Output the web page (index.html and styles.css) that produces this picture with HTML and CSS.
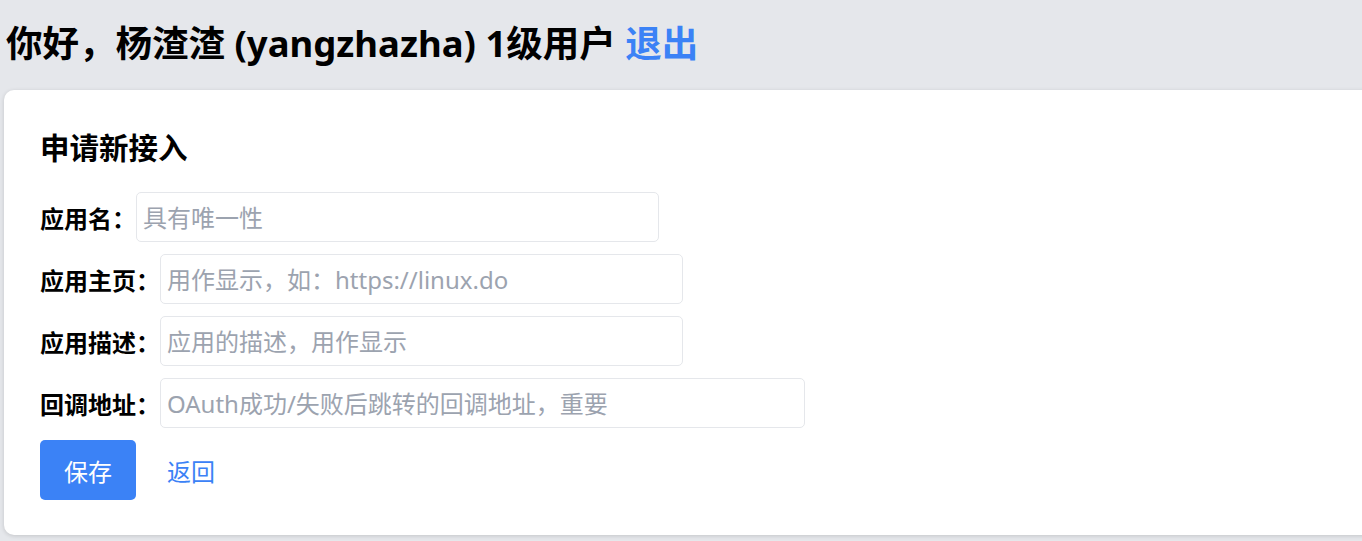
FILE: index.html
```html
<!DOCTYPE html>
<html>

<head>
    <meta charset="UTF-8">
    <title>申请新接入</title>
    <link rel="stylesheet" href="styles.css">
</head>

<body>
    <div class="top">
        <h1>你好，杨渣渣 (yangzhazha) 1级用户 <a href="#" class="logout">退出</a></h1>
    </div>

    <div class="card">
        <h2>申请新接入</h2>
        <form class="form">
            <div class="row">
                <label>应用名：</label>
                <input type="text" class="w-short" placeholder="具有唯一性">
            </div>
            <div class="row">
                <label>应用主页：</label>
                <input type="text" class="w-short" placeholder="用作显示，如：https://linux.do">
            </div>
            <div class="row">
                <label>应用描述：</label>
                <input type="text" class="w-short" placeholder="应用的描述，用作显示">
            </div>
            <div class="row">
                <label>回调地址：</label>
                <input type="text" class="w-long" placeholder="OAuth成功/失败后跳转的回调地址，重要">
            </div>
            <div class="actions">
                <button type="button" class="btn-save">保存</button>
                <a href="#" class="back">返回</a>
            </div>
        </form>
    </div>
</body>

</html>
```

FILE: styles.css
```css
html,
body {
    margin: 0;
    padding: 0;
    overflow: hidden;
}

body {
    background: #e5e7eb;
    font-family: "Noto Sans", "Noto Sans CJK SC", sans-serif;
    color: #000;
    height: 541px;
}

.top {
    padding: 22px 0 0 6px;
}

h1 {
    margin: 0;
    font-size: 36.5px;
    line-height: 43px;
    font-weight: bold;
    white-space: nowrap;
}

.logout {
    color: #3b82f6;
    text-decoration: none;
}

.card {
    margin: 25px -40px 0 4px;
    background: #fff;
    border-radius: 10px;
    box-shadow: 0 1px 4px rgba(0, 0, 0, 0.15);
    padding: 38px 37px 35px 36px;
}

h2 {
    margin: 0 0 24px 0;
    font-size: 29.5px;
    line-height: 40px;
    font-weight: bold;
}

.form {
    display: flex;
    flex-direction: column;
    gap: 12px;
}

.row {
    display: flex;
    align-items: center;
    height: 50px;
}

.row label {
    font-size: 24px;
    font-weight: bold;
    white-space: nowrap;
}

.row input {
    box-sizing: border-box;
    height: 50px;
    border: 1px solid #e5e7eb;
    border-radius: 5px;
    padding: 0 6px;
    font-family: inherit;
    font-size: 24px;
    color: #111;
    outline: none;
}

.row input::placeholder {
    color: #9ca3af;
}

.w-short {
    width: 523px;
}

.w-long {
    width: 645px;
}

.actions {
    display: flex;
    align-items: center;
}

.btn-save {
    width: 96px;
    height: 60px;
    border: none;
    border-radius: 5px;
    background: #3b82f6;
    color: #fff;
    font-family: inherit;
    font-size: 24px;
}

.back {
    margin-left: 31px;
    color: #3b82f6;
    font-size: 24px;
    text-decoration: none;
}
```
